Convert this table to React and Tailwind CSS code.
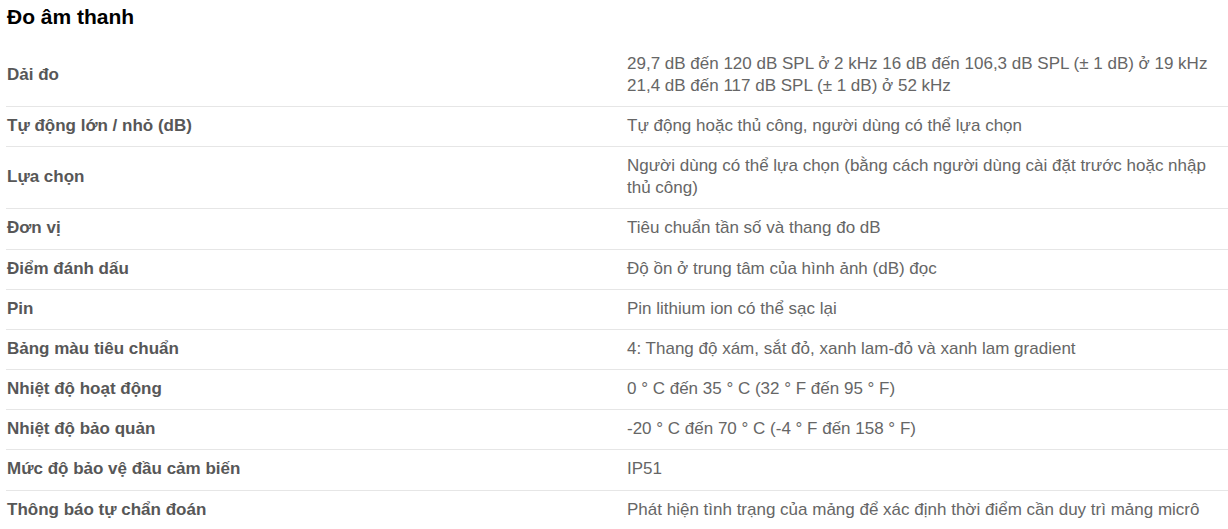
import React from 'react';

const rows = [
  ['Dải đo', '29,7 dB đến 120 dB SPL ở 2 kHz 16 dB đến 106,3 dB SPL (± 1 dB) ở 19 kHz 21,4 dB đến 117 dB SPL (± 1 dB) ở 52 kHz'],
  ['Tự động lớn / nhỏ (dB)', 'Tự động hoặc thủ công, người dùng có thể lựa chọn'],
  ['Lựa chọn', 'Người dùng có thể lựa chọn (bằng cách người dùng cài đặt trước hoặc nhập thủ công)'],
  ['Đơn vị', 'Tiêu chuẩn tần số và thang đo dB'],
  ['Điểm đánh dấu', 'Độ ồn ở trung tâm của hình ảnh (dB) đọc'],
  ['Pin', 'Pin lithium ion có thể sạc lại'],
  ['Bảng màu tiêu chuẩn', '4: Thang độ xám, sắt đỏ, xanh lam-đỏ và xanh lam gradient'],
  ['Nhiệt độ hoạt động', '0 ° C đến 35 ° C (32 ° F đến 95 ° F)'],
  ['Nhiệt độ bảo quản', '-20 ° C đến 70 ° C (-4 ° F đến 158 ° F)'],
  ['Mức độ bảo vệ đầu cảm biến', 'IP51'],
  ['Thông báo tự chẩn đoán', 'Phát hiện tình trạng của mảng để xác định thời điểm cần duy trì mảng micrô'],
];

const App = () => {
  return (
    <div className="bg-white w-[1228px] h-[529px] overflow-hidden font-['Liberation_Sans',Arial,sans-serif]">
      <h2 className="pl-[7px] pt-[4px] h-[45px] text-[21px] font-bold text-black leading-[26px]">Đo âm thanh</h2>
      <div className="ml-[6px]">
        {rows.map(([label, value], i) => (
          <div
            key={label}
            className={`grid grid-cols-[621px_1fr] items-center pt-[8px] pb-[9.17px] ${i > 0 ? 'border-t border-[#e6e6e6]' : ''}`}
          >
            <div className="pl-[1px] text-[17px] leading-[22px] font-bold text-[#575757]">{label}</div>
            <div className="pr-[4px] text-[17px] leading-[22px] text-[#666666]">{value}</div>
          </div>
        ))}
      </div>
    </div>
  );
};

export default App;
